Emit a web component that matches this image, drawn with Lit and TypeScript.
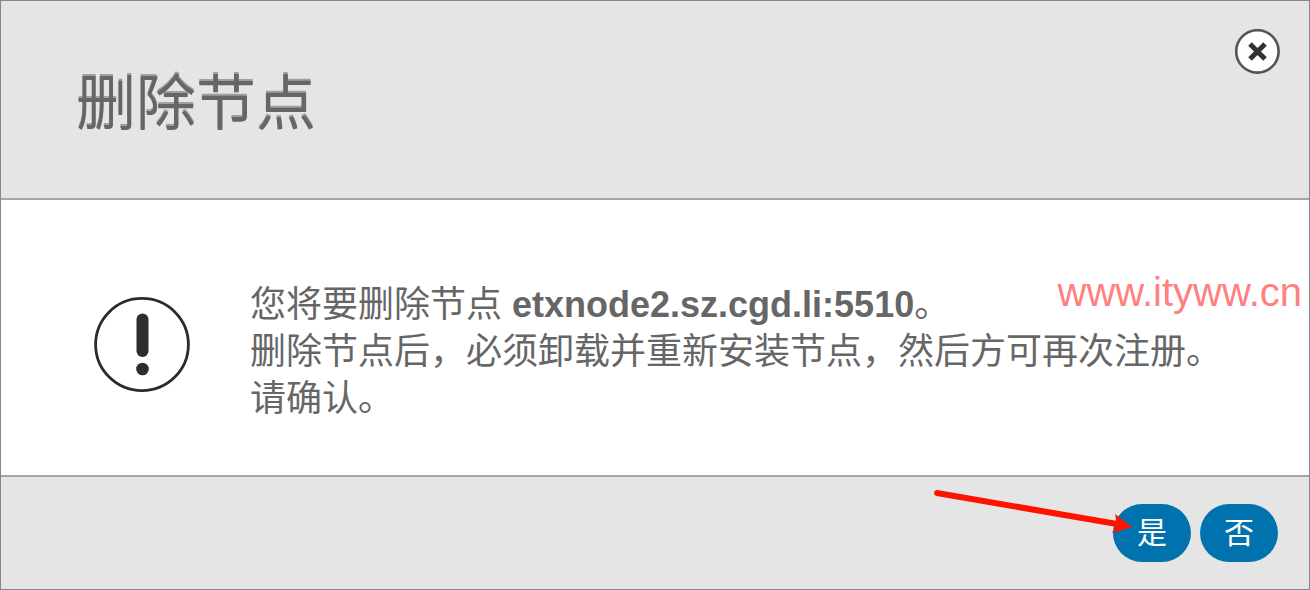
import { LitElement, html, css } from "lit";
import { customElement, property } from "lit/decorators.js";

@customElement("app-root")
export class AppRoot extends LitElement {
  @property() node = "etxnode2.sz.cgd.li:5510";

  static styles = css`
    :host {
      display: block;
      font-family: "Liberation Sans", "Noto Sans CJK SC", sans-serif;
      color: #666;
    }
    * {
      box-sizing: border-box;
    }
    .dialog {
      display: flex;
      flex-direction: column;
      min-height: 100vh;
      border: 1px solid #868686;
      background: #fff;
    }
    .header {
      display: flex;
      justify-content: space-between;
      align-items: flex-start;
      padding: 28px 29px 49px 75px;
      background: #e5e5e5;
      border-bottom: 2px solid #a6a6a6;
    }
    .title {
      margin: 0;
      padding-top: 32px;
      font-size: 60px;
      line-height: 88px;
      font-weight: 400;
      text-shadow: 0 -2px 0 #a0a0a0;
    }
    .close {
      display: block;
      padding: 0;
      border: 0;
      background: none;
      cursor: pointer;
    }
    .close svg,
    .alert {
      display: block;
    }
    .body {
      position: relative;
      flex: 1;
      display: flex;
      align-items: center;
      gap: 59px;
      padding: 14px 60px 0 93px;
    }
    .alert {
      flex: none;
    }
    .message {
      margin: 0;
      padding-top: 14px;
      font-size: 36px;
      line-height: 47px;
    }
    .line {
      display: block;
    }
    .watermark {
      position: absolute;
      top: 69px;
      right: 7px;
      font-size: 40px;
      line-height: 46px;
      color: #ff8080;
    }
    .footer {
      position: relative;
      display: flex;
      justify-content: flex-end;
      gap: 9px;
      padding: 27px 31px;
      background: #e5e5e5;
      border-top: 2px solid #a6a6a6;
    }
    .action {
      width: 78px;
      height: 58px;
      padding: 0;
      border: 0;
      border-radius: 29px;
      background: #0073ae;
      color: #fff;
      font-family: inherit;
      font-size: 30px;
      line-height: 58px;
      cursor: pointer;
    }
    .pointer {
      position: absolute;
      top: 8px;
      right: 170px;
      pointer-events: none;
    }
  `;

  render() {
    return html`
      <section class="dialog" role="dialog" aria-labelledby="title">
        <header class="header">
          <h1 class="title" id="title">删除节点</h1>
          <button class="close" type="button" aria-label="关闭">
            <svg width="46" height="46" viewBox="0 0 46 46">
              <circle cx="23.4" cy="22.4" r="21.2" fill="#fff" stroke="#555" stroke-width="2.6" />
              <path d="M16 15L31 30M31 15L16 30" stroke="#333" stroke-width="5" />
            </svg>
          </button>
        </header>
        <div class="body">
          <svg class="alert" width="97" height="95" viewBox="0 0 97 95" aria-hidden="true">
            <ellipse cx="48" cy="47.5" rx="46.4" ry="46.1" fill="none" stroke="#2d2a2b" stroke-width="2.8" />
            <path d="M48.5 22.5V54" stroke="#2d2d2d" stroke-width="12" stroke-linecap="round" />
            <circle cx="48.5" cy="72" r="6.3" fill="#2d2d2d" />
          </svg>
          <p class="message">
            <span class="line">您将要删除节点 <b>${this.node}</b>。</span>
            <span class="line">删除节点后，必须卸载并重新安装节点，然后方可再次注册。</span>
            <span class="line">请确认。</span>
          </p>
          <span class="watermark">www.ityww.cn</span>
        </div>
        <footer class="footer">
          <button class="action" type="button">是</button>
          <button class="action" type="button">否</button>
          <svg class="pointer" width="210" height="60" viewBox="0 0 210 60" aria-hidden="true">
            <path d="M8 8L188 39" stroke="#ff1200" stroke-width="6" stroke-linecap="round" />
            <path d="M186 29L203 42L183 48L188 39Z" fill="#ff1200" />
          </svg>
        </footer>
      </section>
    `;
  }
}
